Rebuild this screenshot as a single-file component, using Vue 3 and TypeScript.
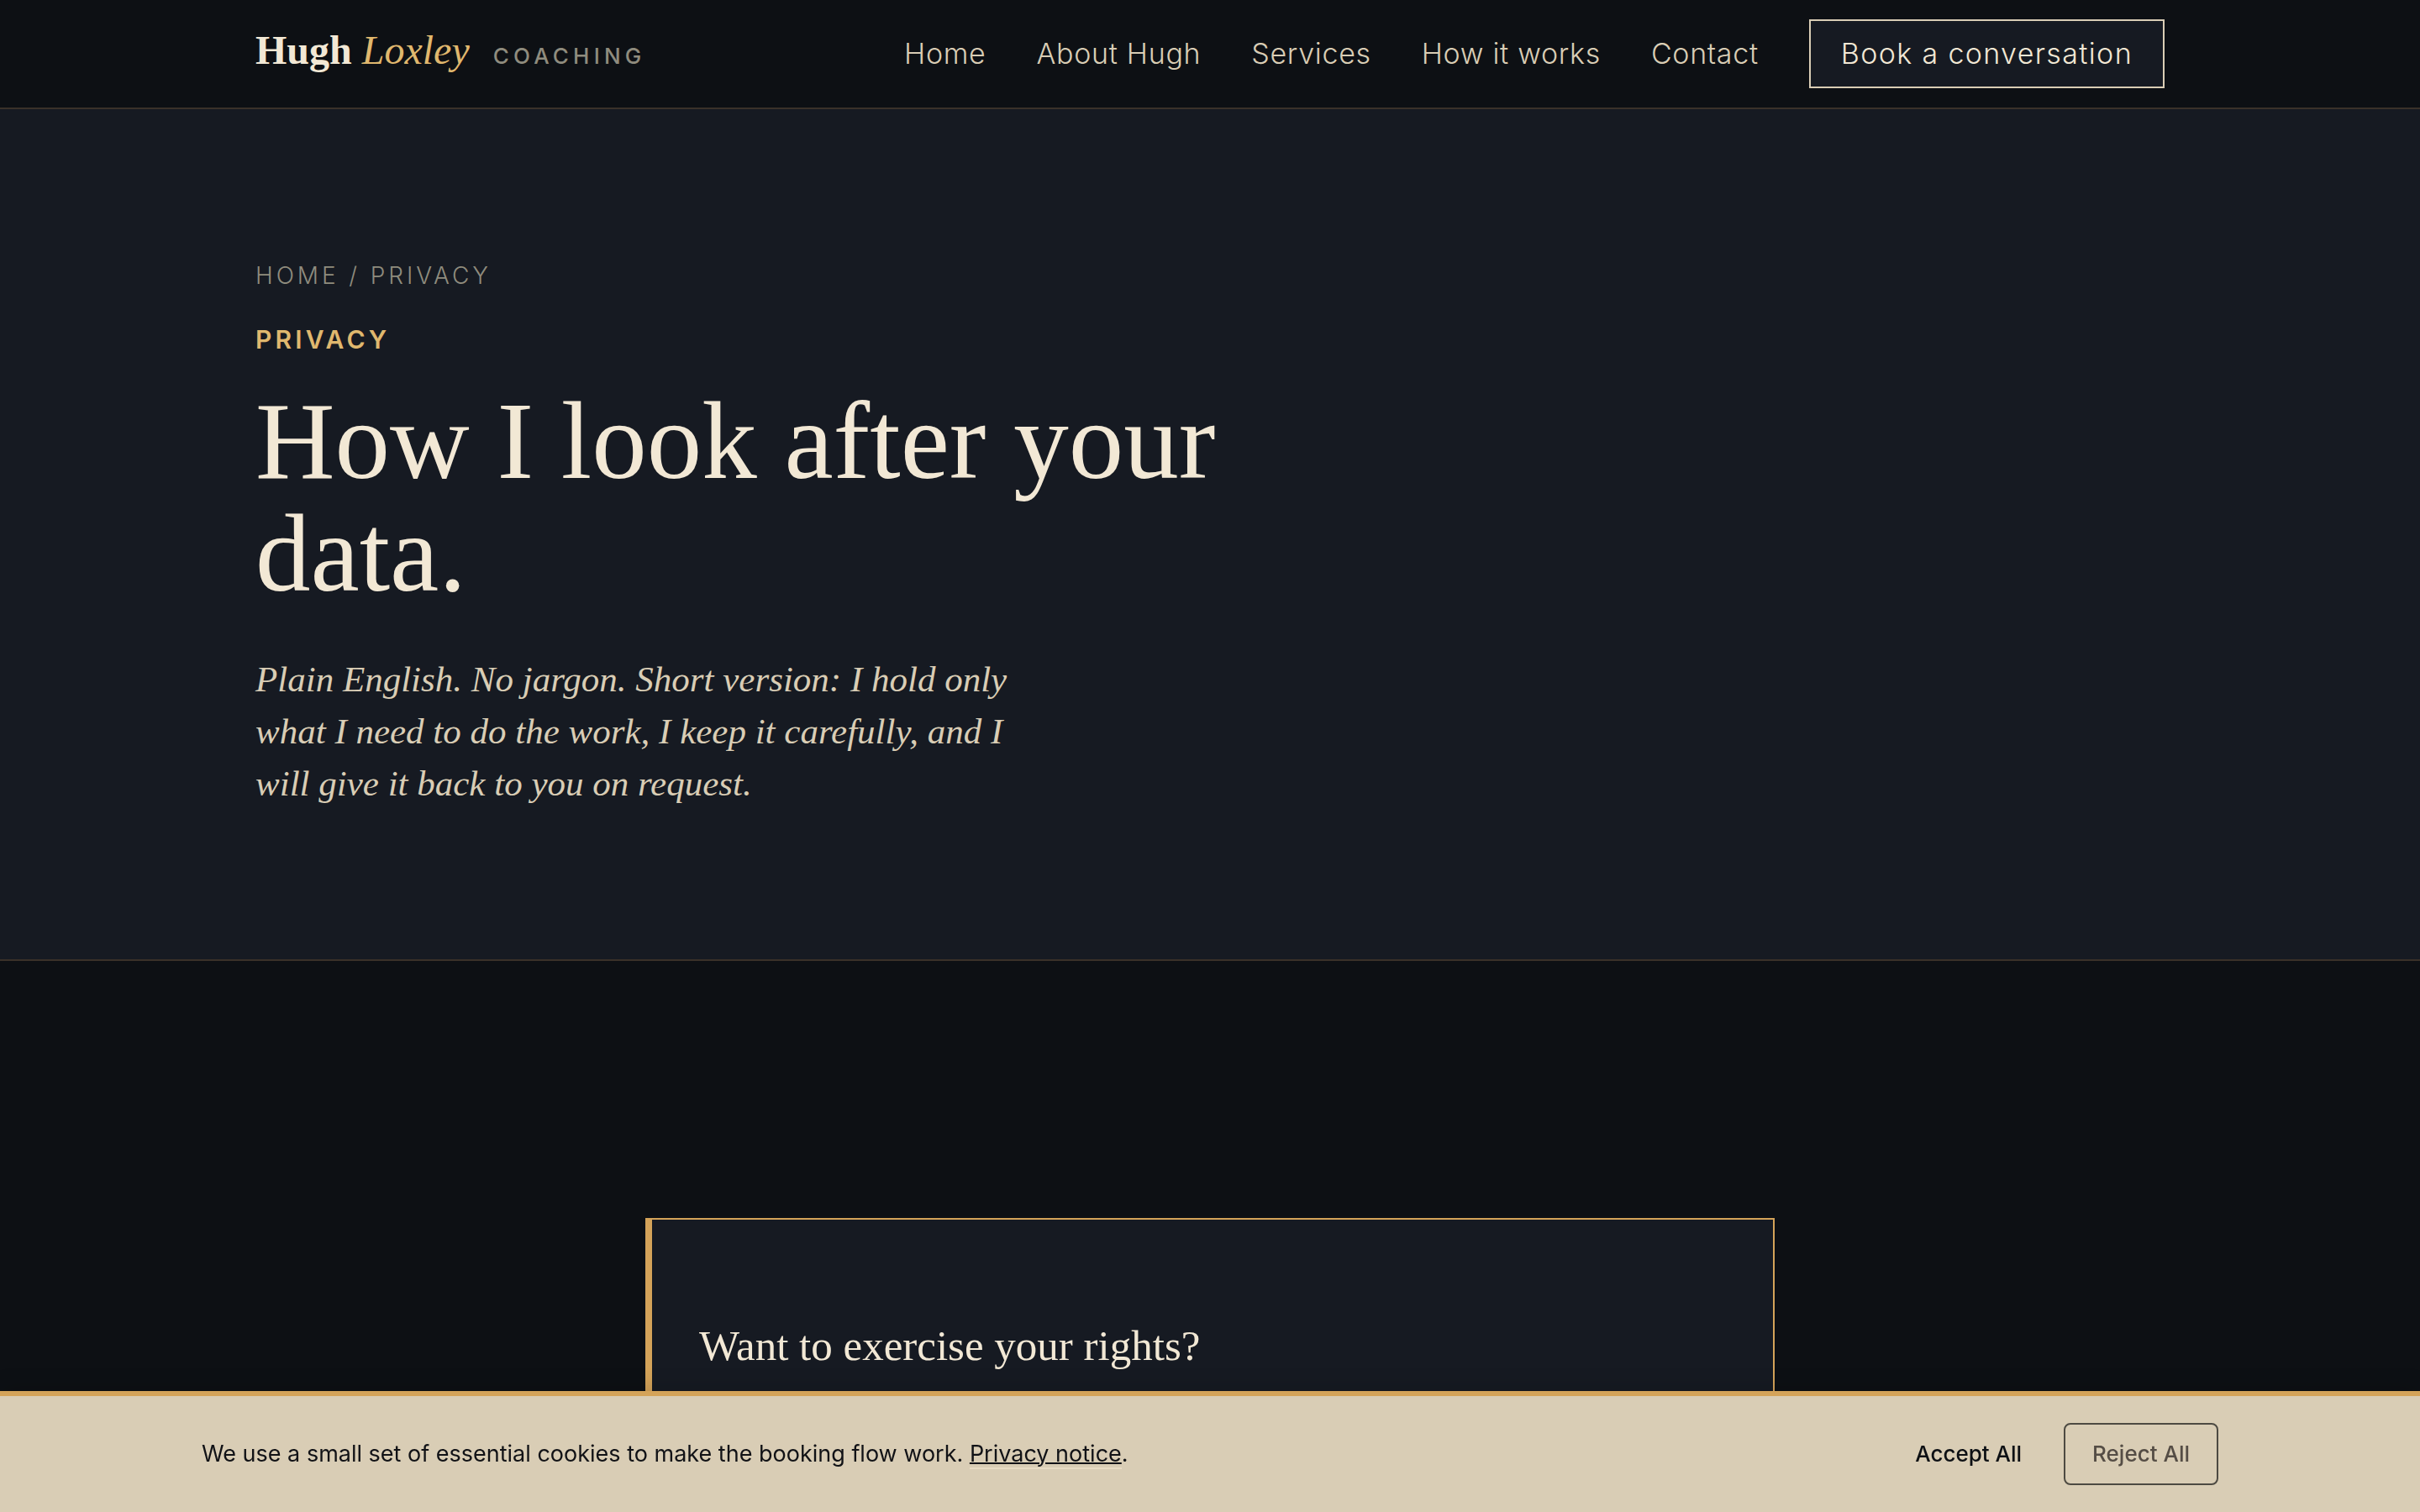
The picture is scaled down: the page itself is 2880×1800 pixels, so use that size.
<script setup lang="ts">
interface NavLink {
  label: string
  href: string
}

const links: NavLink[] = [
  { label: 'Home', href: '#home' },
  { label: 'About Hugh', href: '#about' },
  { label: 'Services', href: '#services' },
  { label: 'How it works', href: '#how' },
  { label: 'Contact', href: '#contact' },
]
</script>

<template>
  <div class="page">
    <header class="header">
      <div class="wrap header-row">
        <a class="brand" href="#home">
          <span class="brand-name">Hugh <em>Loxley</em></span>
          <span class="brand-tag">Coaching</span>
        </a>
        <nav class="nav" aria-label="Main">
          <a v-for="link in links" :key="link.href" :href="link.href">{{ link.label }}</a>
          <a class="cta" href="#book">Book a conversation</a>
        </nav>
      </div>
    </header>

    <section class="hero">
      <div class="wrap">
        <nav class="crumbs" aria-label="Breadcrumb"><a href="#home">Home</a> / Privacy</nav>
        <p class="eyebrow">Privacy</p>
        <h1>How I look after your data.</h1>
        <p class="lead">
          Plain English. No jargon. Short version: I hold only what I need to do the work, I keep it
          carefully, and I will give it back to you on request.
        </p>
      </div>
    </section>

    <main class="body">
      <article class="card">
        <h2>Want to exercise your rights?</h2>
      </article>
    </main>

    <aside class="cookies" aria-label="Cookies">
      <div class="cookies-row">
        <p>
          We use a small set of essential cookies to make the booking flow work.
          <a href="#privacy">Privacy notice</a>.
        </p>
        <div class="actions">
          <button type="button" class="accept">Accept All</button>
          <button type="button" class="reject">Reject All</button>
        </div>
      </div>
    </aside>
  </div>
</template>

<style>
body {
  margin: 0;
  background: #0d1014;
}
</style>

<style scoped>
.page {
  --ink: #0d1014;
  --panel: #161a22;
  --cream: #f2e8d5;
  --sand: #d9cdb5;
  --gold: #d4a359;
  --gold-light: #e0b86e;
  --muted: #8f8c7e;
  --line: #3a3129;
  --serif: "Liberation Serif", serif;
  --sans: Inter, sans-serif;
  display: flex;
  flex-direction: column;
  box-sizing: border-box;
  min-height: 100vh;
  background: var(--ink);
  color: var(--cream);
  font-family: var(--sans);
}

a {
  color: inherit;
  text-decoration: none;
}

.wrap {
  box-sizing: border-box;
  max-width: 2400px;
  margin: 0 auto;
  padding: 0 64px;
}

.header {
  border-bottom: 2px solid var(--line);
}

.header-row {
  display: flex;
  align-items: center;
  justify-content: space-between;
  height: 128px;
}

.brand {
  display: flex;
  align-items: baseline;
  gap: 28px;
  padding-bottom: 8px;
  white-space: nowrap;
}

.brand-name {
  font: 700 48px/64px var(--serif);
}

.brand-name em {
  color: var(--gold-light);
  font-weight: 400;
}

.brand-tag {
  color: var(--muted);
  font-size: 26px;
  font-weight: 500;
  letter-spacing: 0.2em;
  text-transform: uppercase;
}

.nav {
  display: flex;
  align-items: center;
  gap: 60px;
  color: var(--sand);
  font-size: 34px;
  font-weight: 300;
  line-height: 42px;
  letter-spacing: 0.02em;
  white-space: nowrap;
}

.cta {
  padding: 18px 36px;
  border: 2px solid var(--sand);
  background: var(--panel);
  color: var(--cream);
  letter-spacing: 0.04em;
}

.hero {
  padding: 176px 0 178px;
  border-bottom: 2px solid var(--line);
  background: var(--panel);
}

.crumbs {
  color: var(--muted);
  font-size: 28px;
  font-weight: 300;
  line-height: 44px;
  letter-spacing: 0.14em;
  text-transform: uppercase;
}

.eyebrow {
  margin: 30px 0;
  color: var(--gold-light);
  font-size: 30px;
  font-weight: 600;
  line-height: 48px;
  letter-spacing: 0.14em;
  text-transform: uppercase;
}

h1 {
  max-width: 1300px;
  margin: 0;
  font: 400 131px/134px var(--serif);
}

.lead {
  max-width: 940px;
  margin: 52px 0 0;
  color: var(--sand);
  font: italic 400 43px/62px var(--serif);
}

.body {
  display: flex;
  flex: 1;
  padding: 306px 64px 0;
}

.card {
  box-sizing: border-box;
  width: 100%;
  max-width: 1344px;
  margin: 0 auto;
  padding: 120px 56px 0;
  border: 2px solid var(--gold);
  border-bottom: 0;
  border-left-width: 8px;
  background: var(--panel);
}

h2 {
  margin: 0;
  font: 400 51px/60px var(--serif);
}

.cookies {
  position: fixed;
  right: 0;
  bottom: 0;
  left: 0;
  padding: 32px 64px;
  border-top: 6px solid var(--gold);
  background: var(--sand);
  box-shadow: 0 -4px 24px rgba(0, 0, 0, 0.15);
  color: #111216;
}

.cookies-row {
  display: flex;
  align-items: center;
  justify-content: space-between;
  max-width: 2400px;
  margin: 0 auto;
}

.cookies p {
  margin: 0;
  font-size: 27px;
  line-height: 44px;
}

.cookies p a {
  border-bottom: 2px solid #e8dcc4;
  text-decoration: underline;
  text-decoration-thickness: 2px;
}

.actions {
  display: flex;
  gap: 16px;
}

button {
  height: 74px;
  padding: 0 32px;
  border: 2px solid transparent;
  border-radius: 8px;
  background: none;
  font: 500 26px/40px var(--sans);
}

.accept {
  color: #0d1014;
}

.reject {
  border-color: #4d4a42;
  color: #554d45;
}
</style>
